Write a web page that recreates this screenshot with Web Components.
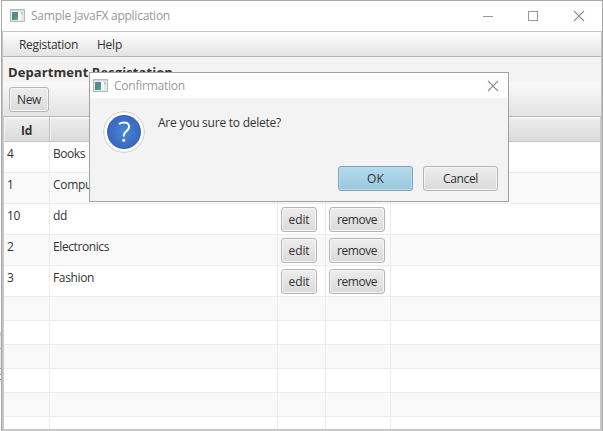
<!DOCTYPE html>
<html lang="en"><head><meta charset="utf-8"><title>Sample JavaFX application</title>
<style>
html,body{margin:0;width:603px;height:431px;overflow:hidden;background:#fff}
body{font:12px/16px "Open Sans","Noto Sans",sans-serif;color:#333}
</style></head><body>
<app-window>
  <title-bar slot="title" label="Sample JavaFX application" w="139" controls="full"></title-bar>
  <menu-bar slot="menu"><fit-text w="59">Registation</fit-text><fit-text w="25">Help</fit-text></menu-bar>
  <page-heading slot="head"><fit-text w="165">Department Resgistation</fit-text></page-heading>
  <tool-bar slot="tools"><fx-button style="width:40px"><fit-text w="24">New</fit-text></fx-button></tool-bar>
  <data-table slot="table"></data-table>
  <confirm-dialog slot="dialog"></confirm-dialog>
</app-window>
<script>
function define(name, html, setup){
  const t=document.createElement('template'); t.innerHTML=html;
  customElements.define(name, class extends HTMLElement{
    connectedCallback(){
      if(this.shadowRoot) return;
      this.attachShadow({mode:'open'}).append(t.content.cloneNode(true));
      if(setup) setup(this,this.shadowRoot);
    }
  });
}
define('fx-button',`<style>:host{display:flex;box-sizing:border-box;height:25px;align-items:center;justify-content:center;border:1px solid #b5b5b5;border-radius:3px;background:linear-gradient(#ededed,#dadada);box-shadow:inset 0 0 0 1px #f5f5f5;flex:none}
:host([primary]){border-color:#7ba3b7;background:linear-gradient(#b3dcee,#9bc6db);box-shadow:inset 0 0 0 1px #b9deed}</style><slot></slot>`);
define('app-icon',`<style>:host{display:block;width:16px;height:13px;flex:none}svg{display:block}</style>
<svg width="16" height="13"><defs><linearGradient id="g" x1="0" y1="0" x2="1" y2="1"><stop stop-color="#6787a5"/><stop offset=".5" stop-color="#4d8c89"/><stop offset="1" stop-color="#6cac83"/></linearGradient></defs><rect x=".5" y=".5" width="14" height="12" fill="#e6eaeb" stroke="#b5b9bb"/><path d="M1 1.5H14" stroke="#d2d7d9"/><rect x="2" y="3" width="6" height="8" fill="url(#g)"/><rect x="8" y="3" width="3" height="8" fill="#fff"/><rect x="11" y="3" width="2" height="8" fill="#dfe8e4"/><path d="M11 3h2v3h-1v-1h-1z" fill="#bdcdc8"/></svg>`);
define('title-bar',`<style>:host{display:flex;box-sizing:border-box;height:30px;background:#fff;color:#999;padding:0 17px 0 8px;align-items:center}
:host([controls=close]){height:25px;padding:0 9px 0 3px}
app-icon{margin-right:5px;margin-bottom:2px}:host([controls=close]) app-icon{margin-bottom:0}i{flex:1}svg{display:block}
:host([controls=close]) .full{display:none}.full{margin-right:35px}</style><app-icon></app-icon><span id="t"></span><i></i>
<svg class="full" width="56" height="12"><path d="M1 6.5H11" stroke="#999"/><rect x="46.5" y="1.5" width="9" height="9" fill="none" stroke="#999"/></svg>
<svg width="12" height="12"><path d="M1 1L11 11M11 1L1 11" stroke="#8f8f8f" stroke-width="1.1" fill="none"/></svg>`,(el,r)=>{
  const f=document.createElement('fit-text');f.setAttribute('w',el.getAttribute('w'));f.textContent=el.getAttribute('label');r.querySelector('#t').append(f);
});
define('menu-bar','<style>:host{display:flex;box-sizing:border-box;height:26px;padding:1px 16px 0;gap:19px;align-items:center;border-top:1px solid #c4c4c4;border-bottom:1px solid #b5b5b5;background:linear-gradient(#fdfdfd,#e3e3e3)}</style><slot></slot>');
define('page-heading','<style>:host{display:flex;box-sizing:border-box;height:25px;padding:7px 5px 0;background:#f3f3f3;font-weight:700;font-size:13px}</style><slot></slot>');
define('tool-bar','<style>:host{display:flex;box-sizing:border-box;height:35px;padding:5px 6px;border-bottom:1px solid #b5b5b5;background:linear-gradient(#f9f9f9,#e3e3e3)}</style><slot></slot>');
define('app-window',`<style>:host{display:flex;box-sizing:border-box;width:603px;height:431px;padding-left:1px;position:relative;
background:linear-gradient(#fff 332px,#c9cfe2 332px 336px,#e4e8f2 336px 348px,#b8a294 348px 349px,#e4e8f2 349px 368px,#78aee8 368px 369px,#e4e8f2 369px 374px,#78aee8 374px 375px,#fff 375px 379px,#888 379px 380px,#fff 380px)}
.f{display:flex;flex-direction:column;box-sizing:border-box;width:602px;height:431px;border:solid #a8a8a8;border-width:1px 1px 0;background:#fff}
.b{display:flex;flex-direction:column;flex:1;min-height:0;background:#c4c4c4;padding:0 1px}
::slotted([slot=dialog]){position:absolute;left:89px;top:72px}</style>
<div class="f"><slot name="title"></slot><div class="b"><slot name="menu"></slot><slot name="head"></slot><slot name="tools"></slot><slot name="table"></slot></div></div><slot name="dialog"></slot>`);
define('data-table',`<style>:host{display:flex;flex-direction:column;flex:1;min-height:0;box-sizing:border-box;border:solid #c8c8c8;border-width:0 1px 2px;overflow:hidden;background:#fff}
.r{display:grid;grid-template-columns:46px 228px 48px 65px 1fr;flex:none;height:31px}
.r.e{height:24px}.r:nth-child(odd){background:#f9f9f9}
.r>div{box-sizing:border-box;border-right:1px solid #ececec;border-bottom:1px solid #ececec;padding:4px 3px 0}
.r>div:last-child{border-right:0}
.r.h:first-child{height:25px;background:linear-gradient(#eee,#dadada)}
.r.h>div{border-color:#c3c3c3;border-top:1px solid #fff;text-align:center;font-weight:700;padding-top:5px;box-shadow:inset 1px 0 #f1f1f1}
</style><div id="b" style="display:contents"></div>`,(el,r)=>{
  const t=(s,w)=>`<fit-text w="${w}">${s}</fit-text>`;
  const btn=(s,w,bw)=>`<fx-button style="width:${bw}px">${t(s,w)}</fx-button>`;
  const rows=[['4',6.5,'Books',32],['1',6.5,'Computer',54],['10',13,'dd',14,1],['2',6.5,'Electronics',56,1],['3',6.5,'Fashion',41,1]];
  let h=`<div class="r h"><div>${t('Id',11)}</div><div></div><div></div><div></div><div></div></div>`;
  for(const [id,iw,n,nw,a] of rows) h+=`<div class="r"><div>${t(id,iw)}</div><div>${t(n,nw)}</div><div style="padding-top:3px">${a?btn('edit',21,36):''}</div><div style="padding-top:3px">${a?btn('remove',40,56):''}</div><div></div></div>`;
  for(let i=0;i<6;i++) h+='<div class="r e"><div></div><div></div><div></div><div></div><div></div></div>';
  r.querySelector('#b').innerHTML=h;
});
define('question-icon',`<style>:host{display:block;width:42px;height:42px;flex:none}svg{display:block}</style><svg width="42" height="42"><defs><radialGradient id="q"><stop stop-color="#4789d8"/><stop offset="1" stop-color="#3965bd"/></radialGradient></defs><circle cx="21" cy="21" r="20.3" fill="#fff" stroke="#cecece"/><circle cx="21" cy="21" r="17" fill="url(#q)"/><path d="M16 13Q18.3 11.5 21 11.5C27.2 11.5 27.2 17 23.8 19.8Q20.7 22.2 20.7 25.5" fill="none" stroke="#fff" stroke-width="2"/><circle cx="20.7" cy="29.3" r="1.5" fill="#fff"/></svg>`);
define('confirm-dialog',`<style>:host{display:flex;flex-direction:column;box-sizing:border-box;width:420px;height:130px;border:1px solid #a0a0a0;background:#f3f3f3}
.m{display:flex;gap:13px;padding:13px 13px 0}.m fit-text{margin-top:4px}
.a{display:flex;justify-content:flex-end;gap:10px;padding:0 10px 10px;margin-top:auto}.a fx-button{width:75px}</style>
<title-bar label="Confirmation" w="71" controls="close"></title-bar>
<div class="m"><question-icon></question-icon><fit-text w="123">Are you sure to delete?</fit-text></div>
<div class="a"><fx-button primary><fit-text w="17">OK</fit-text></fx-button><fx-button><fit-text w="35">Cancel</fit-text></fx-button></div>`);
/* Text run whose tracking is adjusted to a given advance width.
   Defined last, so that each run already inherits its container's font when measured. */
define('fit-text','<style>:host{display:inline-block;white-space:nowrap}span{display:inline-block}</style><span><slot></slot></span>',(el,r)=>{
  const s=r.querySelector('span'), w=+el.getAttribute('w'), n=el.textContent.length;
  const d=(w-s.getBoundingClientRect().width)/n;
  s.style.letterSpacing=d.toFixed(3)+'px'; el.style.width=w+'px';
});
</script></body></html>
